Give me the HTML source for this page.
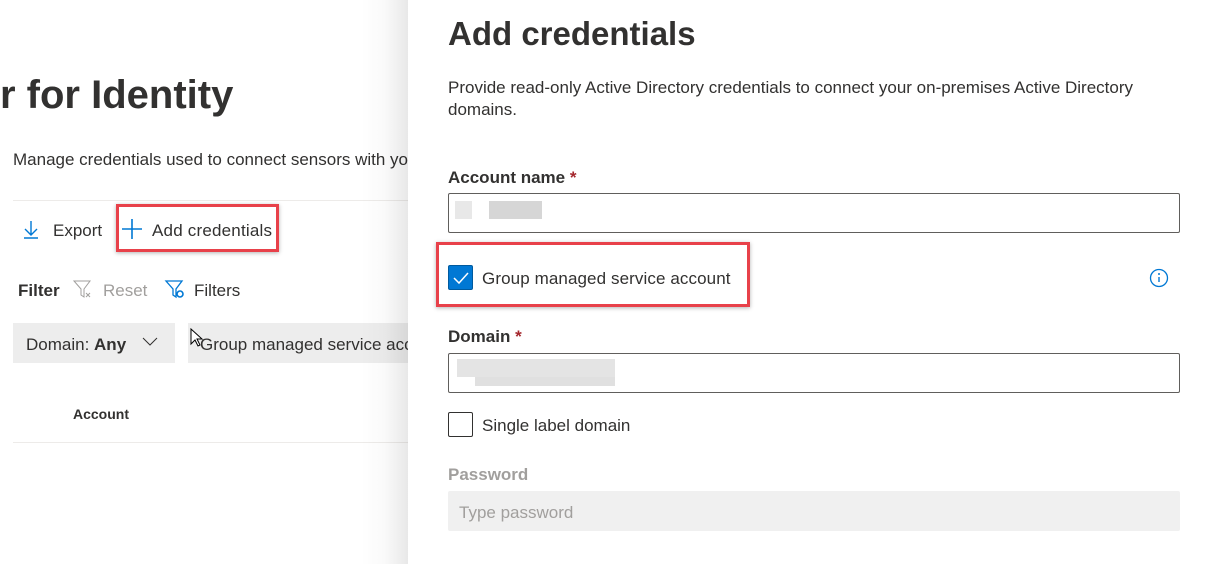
<!DOCTYPE html>
<html><head><meta charset="utf-8"><style>
*{box-sizing:border-box;margin:0;padding:0}
body{width:1206px;height:564px;overflow:hidden;background:#fff;font-family:"Liberation Sans",sans-serif;color:#323130;position:relative}
.a{position:absolute;white-space:nowrap}
.shade{position:absolute;left:360px;top:0;width:48px;height:564px;background:linear-gradient(to right,rgba(0,0,0,0),rgba(0,0,0,0.02) 50%,rgba(0,0,0,0.09))}
.panel{position:absolute;left:408px;top:0;width:798px;height:564px;background:#fff}
.inp{position:absolute;left:448px;width:732px;height:40px;border:1px solid #605e5c;border-radius:2px}
.lbl{font-size:17px;font-weight:bold;color:#323130}
.px{position:absolute;height:9px}
</style></head><body>
<div class="a" style="left:0;top:73px;font-size:40px;font-weight:bold;color:#323130">r for Identity</div>
<div class="a" style="left:13px;top:150px;font-size:17px">Manage credentials used to connect sensors with yo</div>
<div class="a" style="left:13px;top:200px;width:400px;height:1px;background:#edebe9"></div>
<svg class="a" style="left:22px;top:219px" width="18" height="20"><path d="M9 2v13M3 10l6 6 6-6M2 19h14" stroke="#0078d4" stroke-width="1.4" fill="none"/></svg>
<div class="a" style="left:53px;top:221px;font-size:17px">Export</div>
<div class="a" style="left:116px;top:204px;width:163px;height:48px;border:3px solid #e8414a;box-shadow:0 1px 4px rgba(0,0,0,.3)"></div>
<svg class="a" style="left:121px;top:218px" width="22" height="22"><path d="M11 1v20M1 11h20" stroke="#0078d4" stroke-width="1.6"/></svg>
<div class="a" style="left:152px;top:221px;font-size:17px;letter-spacing:0.2px">Add credentials</div>
<div class="a" style="left:18px;top:281px;font-size:17px;font-weight:bold">Filter</div>
<svg class="a" style="left:72px;top:278px" width="22" height="22"><path d="M2 3h16l-6 8v8l-3-2v-6z" stroke="#a19f9d" fill="none"/><path d="M14 15l4 4M18 15l-4 4" stroke="#a19f9d"/></svg>
<div class="a" style="left:103px;top:281px;font-size:17px;color:#a19f9d">Reset</div>
<svg class="a" style="left:164px;top:278px" width="22" height="22"><path d="M2 3h16l-6 8v8l-3-2v-6z" stroke="#0078d4" fill="none" stroke-width="1.3"/><circle cx="16" cy="16" r="3" stroke="#0078d4" fill="none" stroke-width="1.6"/></svg>
<div class="a" style="left:194px;top:281px;font-size:17px">Filters</div>
<div class="a" style="left:13px;top:323px;width:162px;height:40px;background:#ededed"></div>
<div class="a" style="left:26px;top:335px;font-size:17px">Domain: <b>Any</b></div>
<svg class="a" style="left:142px;top:337px" width="16" height="10"><path d="M1 1l7 7 7-7" stroke="#323130" fill="none"/></svg>
<div class="a" style="left:188px;top:323px;width:230px;height:40px;background:#ededed"></div>
<div class="a" style="left:200px;top:335px;font-size:17px">Group managed service acc</div>
<svg class="a" style="left:190px;top:328px" width="14" height="20"><path d="M1 1v15l4-4 3 6 2-1-3-6h5z" fill="#fff" stroke="#000"/></svg>
<div class="a" style="left:73px;top:406px;font-size:14px;font-weight:bold">Account</div>
<div class="a" style="left:13px;top:442px;width:400px;height:1px;background:#edebe9"></div>
<div class="shade"></div>
<div class="panel"></div>
<div class="a" style="left:448px;top:15px;font-size:33px;font-weight:bold">Add credentials</div>
<div class="a" style="left:448px;top:77px;font-size:17px;line-height:22px;white-space:normal;width:740px">Provide read-only Active Directory credentials to connect your on-premises Active Directory domains.</div>
<div class="a lbl" style="left:448px;top:168px">Account name <span style="color:#a4262c">*</span></div>
<div class="inp" style="top:193px"></div>
<div class="px" style="left:455px;top:201px;width:17px;height:18px;background:#e8e8e8"></div>
<div class="px" style="left:489px;top:201px;width:53px;height:18px;background:#d6d6d6"></div>
<div class="a" style="left:436px;top:242px;width:314px;height:65px;border:3px solid #e8414a;box-shadow:0 1px 4px rgba(0,0,0,.3)"></div>
<div class="a" style="left:448px;top:265px;width:25px;height:25px;background:#0078d4;border:1px solid #005a9e;border-radius:2px"></div>
<svg class="a" style="left:452px;top:270px" width="18" height="15"><path d="M2 8l5 5 9-10" stroke="#fff" stroke-width="1.5" fill="none"/></svg>
<div class="a" style="left:482px;top:269px;font-size:17px;letter-spacing:0.1px">Group managed service account</div>
<svg class="a" style="left:1149px;top:268px" width="20" height="20"><circle cx="10" cy="10" r="8.5" stroke="#0078d4" fill="none" stroke-width="1.3"/><path d="M10 9v5" stroke="#0078d4" stroke-width="1.4"/><circle cx="10" cy="6" r="1" fill="#0078d4"/></svg>
<div class="a lbl" style="left:448px;top:327px">Domain <span style="color:#a4262c">*</span></div>
<div class="inp" style="top:353px"></div>
<div class="px" style="left:457px;top:359px;width:158px;height:18px;background:#e4e4e4"></div>
<div class="px" style="left:475px;top:377px;width:140px;height:9px;background:#e0e0e0"></div>
<div class="a" style="left:448px;top:412px;width:25px;height:25px;border:1px solid #323130;border-radius:2px"></div>
<div class="a" style="left:482px;top:416px;font-size:17px">Single label domain</div>
<div class="a lbl" style="left:448px;top:465px;color:#a19f9d">Password</div>
<div class="a" style="left:448px;top:491px;width:732px;height:40px;background:#f0f0f0;border-radius:2px"></div>
<div class="a" style="left:459px;top:503px;font-size:17px;color:#a19f9d">Type password</div>
</body></html>
